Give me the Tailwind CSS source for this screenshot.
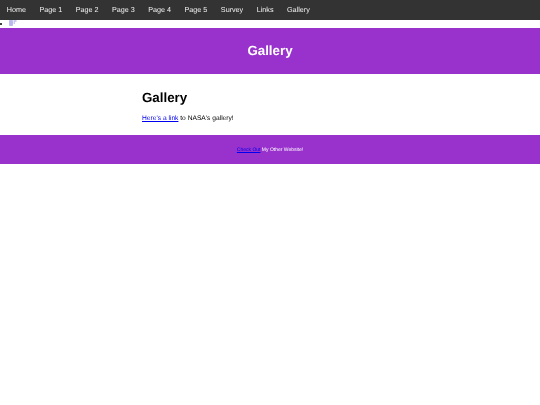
<!DOCTYPE html>
<html lang="en">
<head>
  <meta charset="UTF-8" />
  <title>Gallery</title>
  <script src="https://cdn.jsdelivr.net/npm/@tailwindcss/browser@4"></script>
</head>
<body class="bg-white text-black font-['Liberation_Sans',Arial,sans-serif] [text-rendering:geometricPrecision]">
  <div class="[will-change:transform]">
    <nav class="h-5 bg-[#333] flex text-[7.2px] leading-[19px] text-[#f2f2f2]">
      <a class="px-[6.75px]">Home</a>
      <a class="px-[6.75px]">Page 1</a>
      <a class="px-[6.75px]">Page 2</a>
      <a class="px-[6.75px]">Page 3</a>
      <a class="px-[6.75px]">Page 4</a>
      <a class="px-[6.75px]">Page 5</a>
      <a class="px-[6.75px]">Survey</a>
      <a class="px-[6.75px]">Links</a>
      <a class="px-[6.75px]">Gallery</a>
    </nav>
    <div class="h-[7.5px] flex items-start">
      <span class="w-[2px] h-[2px] mt-[3px] rounded-full bg-black"></span>
      <svg class="ml-[7px]" width="8" height="6" viewBox="0 0 8 6">
        <path d="M0.5 0.5H3.5V5.5H0.5Z" fill="#b9b9f0" stroke="#9a9ae0" stroke-width="0.5"/>
        <path d="M4.5 1H7.5M4.5 3H6" stroke="#7c7cdc" stroke-width="0.8"/>
      </svg>
    </div>
    <header class="h-[46.5px] bg-[#9932cc] flex items-center justify-center">
      <h1 class="text-[13.33px] font-bold text-white">Gallery</h1>
    </header>
    <main class="h-[61px] pl-[142px] pt-[14.5px]">
      <h2 class="text-[13.33px] leading-[17px] font-bold">Gallery</h2>
      <p class="mt-[8.5px] text-[6.67px] leading-[9px]"><a class="text-[#0000ee] underline decoration-[0.5px]">Here's a link</a> to NASA's gallery!</p>
    </main>
    <footer class="h-[28.5px] pt-[2px] bg-[#9932cc] flex items-center justify-center text-[5px] text-white">
      <p><a class="text-[#0000ee] underline decoration-[0.5px]">Check Out</a> My Other Website!</p>
    </footer>
  </div>
</body>
</html>
